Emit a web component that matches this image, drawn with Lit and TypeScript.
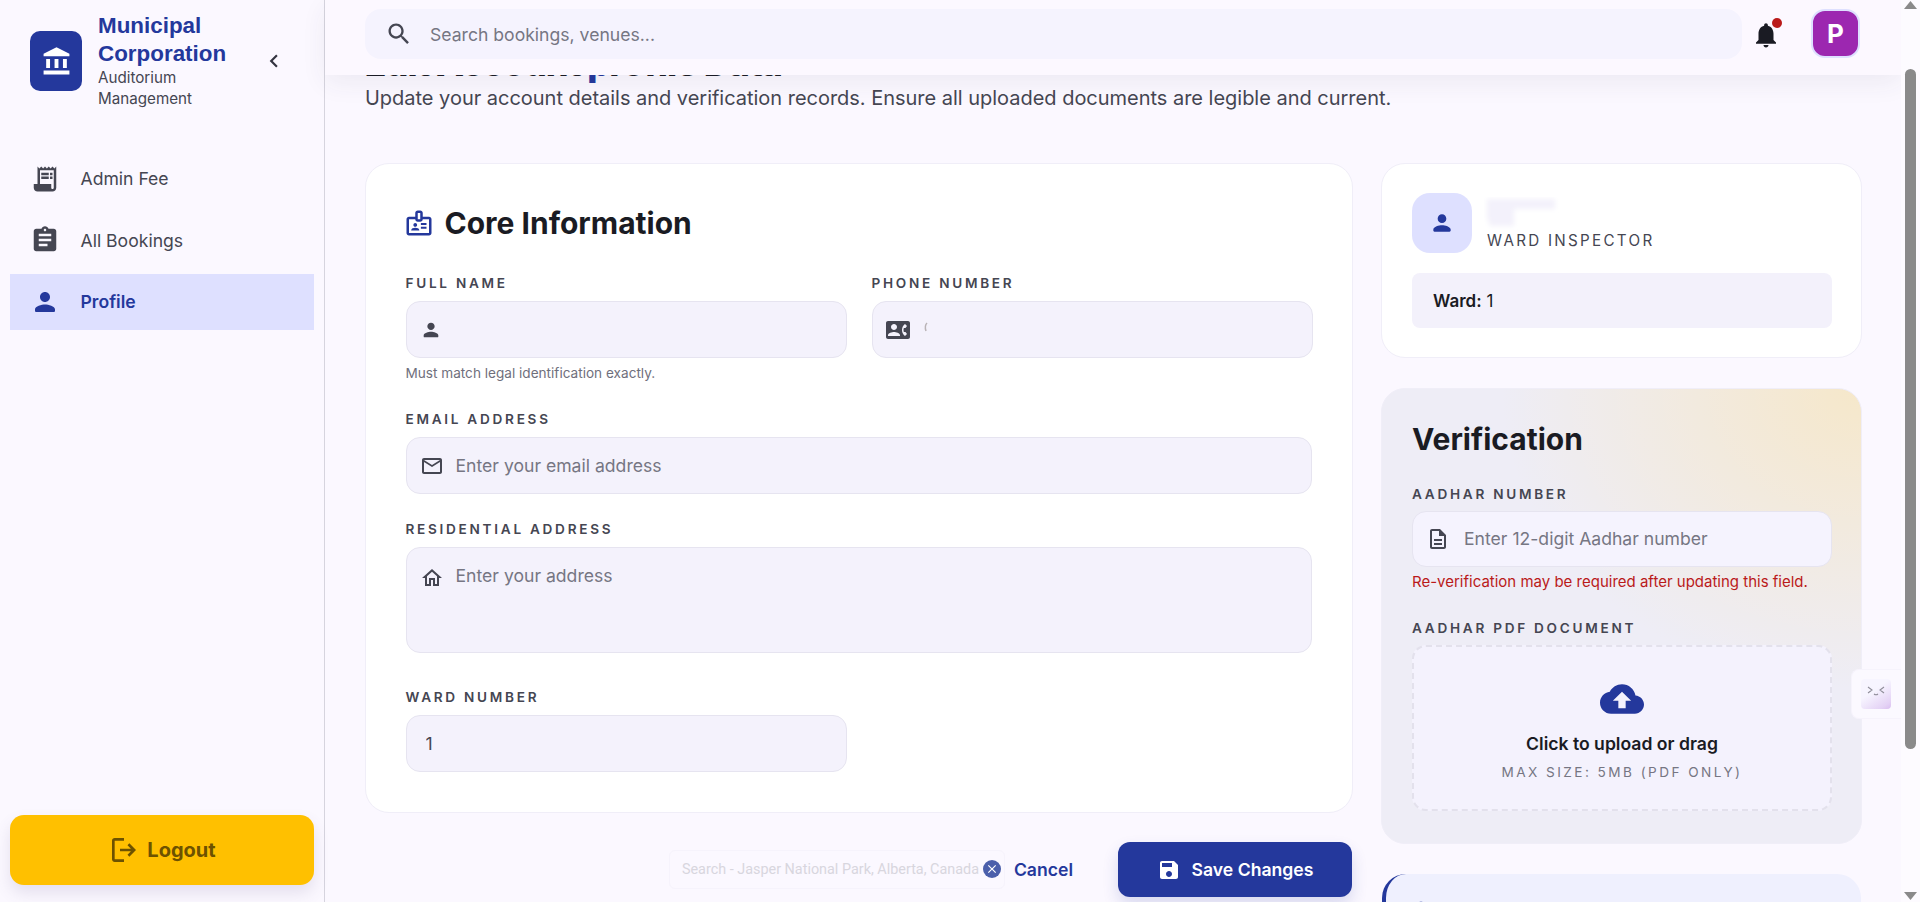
import { LitElement, html, css, svg } from "lit";
import { customElement } from "lit/decorators.js";

const P = {
  bank: "M4 10h3v7H4zm6.5 0h3v7h-3zM2 19h20v3H2zm15-9h3v7h-3zm-5-9L2 6v2h20V6z",
  receipt: "M19.5 3.5 18 2l-1.5 1.5L15 2l-1.5 1.5L12 2l-1.5 1.5L9 2 7.5 3.5 6 2v14H3v3c0 1.66 1.34 3 3 3h12c1.66 0 3-1.34 3-3V2zM19 19c0 .55-.45 1-1 1s-1-.45-1-1v-3H8V5h11zM9 7h6v2H9zM16 7h2v2h-2zM9 10h6v2H9zM16 10h2v2h-2z",
  assign: "M19 3h-4.18C14.4 1.84 13.3 1 12 1c-1.3 0-2.4.84-2.82 2H5c-1.1 0-2 .9-2 2v14c0 1.1.9 2 2 2h14c1.1 0 2-.9 2-2V5c0-1.1-.9-2-2-2zm-7 0c.55 0 1 .45 1 1s-.45 1-1 1-1-.45-1-1 .45-1 1-1zm2 14H7v-2h7v2zm3-4H7v-2h10v2zm0-4H7V7h10v2z",
  person: "M12 12c2.21 0 4-1.79 4-4s-1.79-4-4-4-4 1.79-4 4 1.79 4 4 4zm0 2c-2.67 0-8 1.34-8 4v1c0 .55.45 1 1 1h14c.55 0 1-.45 1-1v-1c0-2.66-5.33-4-8-4z",
  chevron: "M15.41 7.41 14 6l-6 6 6 6 1.41-1.41L10.83 12z",
  search: "M15.5 14h-.79l-.28-.27C15.41 12.59 16 11.11 16 9.5 16 5.91 13.09 3 9.5 3S3 5.91 3 9.5 5.91 16 9.5 16c1.61 0 3.09-.59 4.23-1.57l.27.28v.79l5 4.99L20.49 19l-4.99-5zm-6 0C7.01 14 5 11.99 5 9.5S7.01 5 9.5 5 14 7.01 14 9.5 11.99 14 9.5 14z",
  bell: "M12 22c1.1 0 2-.9 2-2h-4c0 1.1.89 2 2 2zm6-6v-5c0-3.07-1.64-5.64-4.5-6.32V4c0-.83-.67-1.5-1.5-1.5s-1.5.67-1.5 1.5v.68C7.63 5.36 6 7.92 6 11v5l-2 2v1h16v-1l-2-2z",
  logout: "M5 21q-.825 0-1.413-.588T3 19V5q0-.825.588-1.413T5 3h7v2H5v14h7v2H5Zm11-4-1.375-1.45 2.55-2.55H9v-2h8.175l-2.55-2.55L16 7l5 5-5 5Z",
  badge: "M20 7h-5V4c0-1.1-.9-2-2-2h-2c-1.1 0-2 .9-2 2v3H4c-1.1 0-2 .9-2 2v11c0 1.1.9 2 2 2h16c1.1 0 2-.9 2-2V9c0-1.1-.9-2-2-2zm-9-3h2v5h-2V4zm9 16H4V9h5c0 1.1.9 2 2 2h2c1.1 0 2-.9 2-2h5v11zM9 15c.83 0 1.5-.67 1.5-1.5S9.83 12 9 12s-1.5.67-1.5 1.5S8.17 15 9 15zm2.08 1.18c-.64-.28-1.34-.43-2.08-.43s-1.44.15-2.08.43c-.72.31-1.17 1-1.17 1.79V18h6.5v-.03c0-.79-.45-1.48-1.17-1.79zM13.5 12H18v1.5h-4.5zM13.5 15H18v1.5h-4.5z",
  phone: "M22 3H2C.9 3 0 3.9 0 5v14c0 1.1.9 2 2 2h20c1.1 0 1.99-.9 1.99-2L24 5c0-1.1-.9-2-2-2zM8 6c1.66 0 3 1.34 3 3s-1.34 3-3 3-3-1.34-3-3 1.34-3 3-3zm6 12H2v-1c0-2 4-3.1 6-3.1s6 1.1 6 3.1v1zm3.85-4h1.64L21 16l-1.99 1.99c-1.31-.98-2.28-2.38-2.73-3.99-.18-.64-.28-1.31-.28-2s.1-1.36.28-2c.45-1.62 1.42-3.01 2.73-3.99L21 8l-1.51 2h-1.64c-.22.63-.35 1.3-.35 2s.13 1.37.35 2z",
  mail: "M20 4H4c-1.1 0-1.99.9-1.99 2L2 18c0 1.1.9 2 2 2h16c1.1 0 2-.9 2-2V6c0-1.1-.9-2-2-2zm0 14H4V8l8 5 8-5v10zm-8-7L4 6h16l-8 5z",
  home: "M12 5.69l5 4.5V18h-2v-6H9v6H7v-7.81l5-4.5M12 3 2 12h3v8h6v-6h2v6h6v-8h3L12 3z",
  doc: "M8 16h8v2H8zm0-4h8v2H8zm6-10H6c-1.1 0-2 .9-2 2v16c0 1.1.89 2 1.99 2H18c1.1 0 2-.9 2-2V8l-6-6zm4 18H6V4h7v5h5v11z",
  cloud: "M19.35 10.04C18.67 6.59 15.64 4 12 4 9.11 4 6.6 5.64 5.35 8.04 2.34 8.36 0 10.91 0 14c0 3.31 2.69 6 6 6h13c2.76 0 5-2.24 5-5 0-2.64-2.05-4.78-4.65-4.96zM14 13v4h-4v-4H7l5-5 5 5h-3z",
  save: "M17 3H5c-1.11 0-2 .9-2 2v14c0 1.1.89 2 2 2h14c1.1 0 2-.9 2-2V7l-4-4zm-5 16c-1.66 0-3-1.34-3-3s1.34-3 3-3 3 1.34 3 3-1.34 3-3 3zm3-10H5V5h10v4z",
  close: "M19 6.41 17.59 5 12 10.59 6.41 5 5 6.41 10.59 12 5 17.59 6.41 19 12 13.41 17.59 19 19 17.59 13.41 12z",
};

const icon = (d: string, size: number) =>
  html`<svg class="ic" width=${size} height=${size} viewBox="0 0 24 24" fill="currentColor">${svg`<path d=${d}></path>`}</svg>`;

@customElement("app-root")
export class AppRoot extends LitElement {
  static styles = css`
    :host { display: flex; width: 1920px; height: 902px; overflow: hidden; position: relative; background: #fbf8ff; color: #1a1b23; font-family: Inter, "Liberation Sans", sans-serif; }
    * { box-sizing: border-box; }
    .ic { display: block; flex: none; }

    .side { width: 325px; flex: none; height: 902px; border-right: 1.5px solid #d6d4de; display: flex; flex-direction: column; padding-bottom: 17px; }
    .brand { height: 122px; display: flex; align-items: center; padding-left: 30px; }
    .logo { width: 52px; height: 60px; border-radius: 10px; background: #24389c; color: #fff; display: flex; align-items: center; justify-content: center; flex: none; margin-right: 16px; }
    .brand-text { width: 148px; flex: none; }
    .brand-title { font: 700 22.4px/28px "Liberation Sans", Arial, sans-serif; color: #24389c; }
    .brand-sub { font-size: 15.2px; line-height: 20.8px; color: #454652; white-space: normal; }
    .collapse { color: #333440; margin-left: 15px; }
    nav { display: flex; flex-direction: column; gap: 5.5px; padding: 28.5px 10px 0; flex: 1; }
    .item { height: 56px; display: flex; align-items: center; gap: 20.5px; padding-left: 20px; font-size: 17.6px; color: #454652; }
    .item.on { background: #dee0ff; color: #24389c; font-weight: 600; }
    .logoutbtn { margin: 0 10px; height: 70px; border-radius: 14px; background: #ffc000; color: #6d5200; display: flex; align-items: center; justify-content: center; gap: 7px; font-size: 20px; font-weight: 700; box-shadow: 0 8px 16px rgba(90, 80, 130, 0.14); }

    .main { flex: 1; min-width: 0; height: 902px; display: flex; flex-direction: column; position: relative; }
    .top { height: 75px; flex: none; background: #fcf8ff; display: flex; align-items: flex-start; padding: 9px 41px 0 40px; position: relative; z-index: 2; box-shadow: 0 8px 24px rgba(60, 55, 90, 0.07); }
    .search { width: 1380px; height: 50px; border-radius: 16px; background: #f5f3fe; display: flex; align-items: center; padding-left: 20px; gap: 17px; color: #454652; font-size: 17.6px; }
    .search span { color: #767683; }
    .bell { position: relative; margin: 11px 0 0 9px; color: #1a1b23; width: 30px; height: 30px; }
    .dot { position: absolute; right: -1px; top: -2px; width: 10px; height: 10px; border-radius: 50%; background: #ba1a1a; }
    .avatar { width: 49px; height: 49px; margin: 0 0 0 30px; border-radius: 14px; background: #9c27b0; border: 2px solid #dee0ff; color: #fff; font-weight: 700; font-size: 26px; display: flex; align-items: center; justify-content: center; }

    .content { flex: 1; min-height: 0; padding: 0 0 0 39.5px; overflow: hidden; }
    .heading { font-size: 36px; font-weight: 800; line-height: 43px; margin: -33.4px 0 0; letter-spacing: -1px; white-space: nowrap; }
    .heading b { color: #24389c; font-weight: 800; }
    .lead { font-size: 20px; line-height: 28px; letter-spacing: -0.02px; color: #454652; margin: -0.6px 0 0 .5px; }
    .grid { display: grid; grid-template-columns: 988.5px 481px; gap: 28px; margin-top: 51px; align-items: start; }

    .card { background: #fff; border: 1px solid #f0eef8; border-radius: 24px; }
    .core { padding: 41px 40px 40px; }
    .core h2 { display: flex; align-items: center; gap: 11px; margin: 0 0 34px; font-size: 30px; line-height: 36px; font-weight: 700; }
    .core h2 .ic { color: #24389c; margin-left: -2px; }
    .row { display: grid; grid-template-columns: 441px 441px; gap: 25px; }
    label { display: block; font-size: 13.6px; line-height: 16px; font-weight: 600; letter-spacing: 0.2em; color: #454652; margin-bottom: 10px; white-space: nowrap; }
    .input { display: flex; align-items: center; height: 57px; background: #f4f2fc; border: 1.5px solid #e6e4f0; border-radius: 14px; padding-left: 13px; gap: 12px; color: #454652; }
    .input input, .input textarea { flex: 1; min-width: 0; border: 0; outline: 0; background: transparent; padding: 0; font: 400 17.6px/24px Inter, sans-serif; color: #454652; resize: none; }
    .input input::placeholder, .input textarea::placeholder { color: #767683; opacity: 1; }
    .input.area { height: 106px; align-items: flex-start; padding-top: 16px; }
    .input.area .ic { margin-top: 2px; }
    .input.plain { padding-left: 19px; }
    .help { font-size: 13.6px; line-height: 16px; color: #6f6f7c; margin: 7px 0 0; }
    .f-email { margin-top: 30px; }
    .f-addr { margin-top: 27px; }
    .f-ward { margin-top: 36px; width: 441px; }
    .smudge { width: 8px; height: 12px; margin-top: -3px; margin-right: -1px; flex: none; filter: blur(0.4px); }

    .foot { display: flex; justify-content: flex-end; align-items: center; margin-top: 29px; padding-right: 1px; }
    .ghost { width: 336px; height: 39px; border: 1px solid #f6f3fc; border-radius: 6px; display: flex; align-items: center; padding-left: 12px; position: relative; font: 400 14.4px Roboto, sans-serif; color: #d8d6de; margin-right: 9px; overflow: hidden; white-space: nowrap; }
    .ghost i { position: absolute; right: 3px; top: 9px; width: 18px; height: 18px; border-radius: 50%; background: #4b5fab; color: #fff; display: flex; align-items: center; justify-content: center; }
    .cancel { color: #24389c; font-size: 17.6px; font-weight: 600; margin-right: 45px; }
    .savebtn { width: 234px; height: 55px; border-radius: 12px; background: #24389c; color: #fff; display: flex; align-items: center; justify-content: center; gap: 11px; font-size: 17.6px; font-weight: 600; box-shadow: 0 8px 16px rgba(36, 56, 156, 0.16); }

    .col { display: flex; flex-direction: column; gap: 30px; }
    .who { padding: 29px 29px 29px 30px; height: 195px; }
    .who-top { display: flex; gap: 15px; }
    .who-av { width: 60px; height: 60px; border-radius: 18px; background: #dee0ff; color: #24389c; display: flex; align-items: center; justify-content: center; }
    .who-role { font-size: 15.2px; line-height: 18px; letter-spacing: 0.15em; color: #454652; margin-top: 2px; }
    .blur { display: block; height: 33px; margin: 4px 0 0 -3px; }
    .ward { margin-top: 20px; height: 55px; background: #f3f1fb; border-radius: 8px; display: flex; align-items: center; padding-left: 21px; font-size: 17px; color: #1a1b23; gap: 5px; }
    .ward b { font-weight: 600; }
    .verify { padding: 32px 29px 32px 30px; height: 456px; border-radius: 24px; border: 1px solid #f0eef8; background: radial-gradient(ellipse 360px 300px at 100% 0%, rgba(255, 225, 150, 0.46), rgba(255, 225, 150, 0) 100%), #eeedf6; }
    .verify h2 { margin: 0 0 29px; font-size: 30px; line-height: 36px; font-weight: 700; }
    .verify label { margin-bottom: 9px; }
    .verify .input { height: 56px; background: #f5f3fe; border-width: 1px; gap: 14px; }
    .warn { color: #ba1a1a; font-size: 15px; line-height: 20px; margin: 5px 0 28px; }
    .drop { height: 166px; border: 2px dashed #e3e1ec; border-radius: 14px; background: #f4f2fd; display: flex; flex-direction: column; align-items: center; padding-top: 30px; color: #24389c; }
    .drop strong { color: #1a1b23; font-size: 17.6px; line-height: 24px; font-weight: 600; margin-top: 11px; }
    .drop small { color: #767683; font-size: 13.6px; line-height: 16px; letter-spacing: 0.18em; margin-top: 8px; }
    .tip { margin: 0 1px; height: 120px; border-radius: 24px; background: #eff0fe; border-left: 4px solid #24389c; padding: 23px 0 0 21px; color: #24389c; }

    .sb { width: 19px; flex: none; height: 902px; background: #fdfbff; display: flex; flex-direction: column; align-items: center; position: relative; z-index: 3; }
    .sb svg { display: block; }
    .thumb { width: 11px; height: 680px; border-radius: 6px; background: #8a8a8a; margin-top: 60px; }
    .arrow-dn { margin-top: auto; margin-bottom: 2px; }
    .arrow-up { margin-top: 1px; margin-bottom: 0; height: 8px; }

    .widget { position: absolute; left: 1851px; top: 669px; width: 50px; height: 50px; border-radius: 8px 0 0 8px; background: #fbf9ff; border: 1px solid #f6f3fc; border-right: 0; padding: 9px; z-index: 2; }
    .face { width: 30px; height: 30px; border-radius: 4px; background: linear-gradient(145deg, #f7f5ff 40%, #e4d2f5 85%, #d9bdf0); }
  `;

  render() {
    return html`
      <aside class="side">
        <div class="brand">
          <div class="logo">${icon(P.bank, 31)}</div>
          <div class="brand-text">
            <div class="brand-title">Municipal Corporation</div>
            <div class="brand-sub">Auditorium Management</div>
          </div>
          <div class="collapse">${icon(P.chevron, 26)}</div>
        </div>
        <nav>
          <div class="item">${icon(P.receipt, 30)}<span>Admin Fee</span></div>
          <div class="item">${icon(P.assign, 30)}<span>All Bookings</span></div>
          <div class="item on">${icon(P.person, 30)}<span>Profile</span></div>
        </nav>
        <div class="logoutbtn">${icon(P.logout, 32)}<span>Logout</span></div>
      </aside>

      <div class="main">
        <header class="top">
          <div class="search">${icon(P.search, 28)}<span>Search bookings, venues...</span></div>
          <div class="bell">${icon(P.bell, 30)}<i class="dot"></i></div>
          <div class="avatar">P</div>
        </header>
        <div class="content">
          <h1 class="heading">Edit Account <b>p</b>rofile Data</h1>
          <p class="lead">Update your account details and verification records. Ensure all uploaded documents are legible and current.</p>
          <div class="grid">
            <div>
              <section class="card core">
                <h2>${icon(P.badge, 30)}Core Information</h2>
                <div class="row">
                  <div>
                    <label>FULL NAME</label>
                    <div class="input">${icon(P.person, 22)}<input /></div>
                    <p class="help">Must match legal identification exactly.</p>
                  </div>
                  <div>
                    <label>PHONE NUMBER</label>
                    <div class="input">
                      ${icon(P.phone, 24)}
                      <svg class="smudge" viewBox="0 0 8 12"><path d="M5 1C3 3 3 6 4 9" stroke="#b9b3b6" stroke-width="1.5" fill="none"></path></svg>
                      <input />
                    </div>
                  </div>
                </div>
                <div class="f-email">
                  <label>EMAIL ADDRESS</label>
                  <div class="input">${icon(P.mail, 24)}<input placeholder="Enter your email address" /></div>
                </div>
                <div class="f-addr">
                  <label>RESIDENTIAL ADDRESS</label>
                  <div class="input area">${icon(P.home, 24)}<textarea rows="3" placeholder="Enter your address"></textarea></div>
                </div>
                <div class="f-ward">
                  <label>WARD NUMBER</label>
                  <div class="input plain"><input value="1" /></div>
                </div>
              </section>
              <div class="foot">
                <div class="ghost">Search - Jasper National Park, Alberta, Canada<i>${icon(P.close, 14)}</i></div>
                <span class="cancel">Cancel</span>
                <div class="savebtn">${icon(P.save, 24)}<span>Save Changes</span></div>
              </div>
            </div>

            <div class="col">
              <section class="card who">
                <div class="who-top">
                  <div class="who-av">${icon(P.person, 26)}</div>
                  <div>
                    <svg class="blur" width="90" height="33" viewBox="0 0 90 33"><defs><filter id="b" x="-20%" y="-20%" width="140%" height="140%"><feGaussianBlur stdDeviation="2.4"></feGaussianBlur></filter></defs><path d="M3 2h68v10H30v17H6L3 20z" fill="#f3f1fb" filter="url(#b)"></path></svg>
                    <div class="who-role">WARD INSPECTOR</div>
                  </div>
                </div>
                <div class="ward"><b>Ward:</b><span>1</span></div>
              </section>
              <section class="verify">
                <h2>Verification</h2>
                <label>AADHAR NUMBER</label>
                <div class="input">${icon(P.doc, 24)}<input placeholder="Enter 12-digit Aadhar number" /></div>
                <p class="warn">Re-verification may be required after updating this field.</p>
                <label>AADHAR PDF DOCUMENT</label>
                <div class="drop">
                  ${icon(P.cloud, 44)}
                  <strong>Click to upload or drag</strong>
                  <small>MAX SIZE: 5MB (PDF ONLY)</small>
                </div>
              </section>
              <section class="tip">${icon(P.person, 28)}</section>
            </div>
          </div>
        </div>
      </div>

      <div class="sb">
        <svg class="arrow-up" width="13" height="8" viewBox="0 0 13 8"><path d="M6.5 0 13 8H0z" fill="#8a8a8a"></path></svg>
        <div class="thumb"></div>
        <svg class="arrow-dn" width="13" height="8" viewBox="0 0 13 8"><path d="M0 0h13L6.5 8z" fill="#8a8a8a"></path></svg>
      </div>

      <div class="widget">
        <div class="face">
          <svg width="30" height="30" viewBox="0 0 30 30" fill="none" stroke="#8f8d99" stroke-width="1.1"><path d="M7 8l4 3-4 3M23 8l-4 3 4 3M13 15q2 1.6 4 0"></path></svg>
        </div>
      </div>
    `;
  }
}
